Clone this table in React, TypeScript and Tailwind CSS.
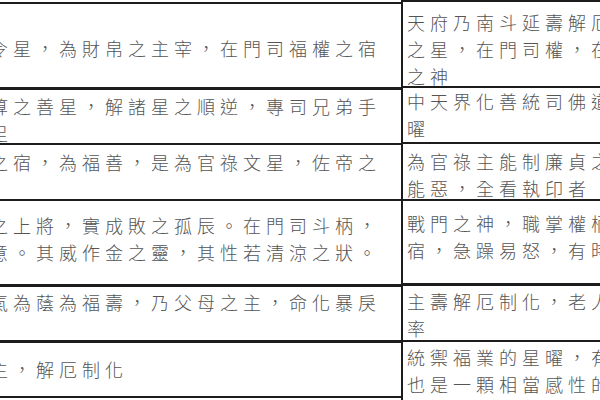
import React from "react";

type Row = {
  lines: string[];
  h: string;
  pt: string;
  border: string;
};

const leftRows: Row[] = [
  { lines: ["令星，為財帛之主宰，在門司福權之宿"], h: "h-[85px]", pt: "pt-[31px]", border: "border-t-2" },
  { lines: ["算之善星，解諸星之順逆，專司兄弟手", "足"], h: "h-[56px]", pt: "pt-[3px]", border: "border-t-[3px]" },
  { lines: ["之宿，為福善，是為官祿文星，佐帝之"], h: "h-[56px]", pt: "pt-[4px]", border: "border-t-2" },
  {
    lines: ["之上將，實成敗之孤辰。在門司斗柄，", "意。其威作金之靈，其性若清涼之狀。"],
    h: "h-[85px]",
    pt: "pt-[11px]",
    border: "border-t-2",
  },
  { lines: ["氣為蔭為福壽，乃父母之主，命化暴戾"], h: "h-[56px]", pt: "pt-[2px]", border: "border-t-[3px]" },
  { lines: ["主，解厄制化"], h: "h-[58px] border-b-2", pt: "pt-[13px]", border: "border-t-[3px]" },
];

const rightRows: Row[] = [
  { lines: ["天府乃南斗延壽解厄之", "之星，在門司權，在相", "之神"], h: "h-[86px]", pt: "pt-[7px]", border: "border-t-2" },
  { lines: ["中天界化善統司佛道", "曜"], h: "h-[56px]", pt: "pt-0", border: "border-t-2" },
  { lines: ["為官祿主能制廉貞之惡", "能惡，全看執印者"], h: "h-[57px]", pt: "pt-[4px]", border: "border-t-2" },
  { lines: ["戰門之神，職掌權柄", "宿，急躁易怒，有時"], h: "h-[84px]", pt: "pt-[9px]", border: "border-t-2" },
  { lines: ["主壽解厄制化，老人", "率"], h: "h-[57px]", pt: "pt-[2px]", border: "border-t-[3px]" },
  { lines: ["統禦福業的星曜，有", "也是一顆相當感性的"], h: "flex-1", pt: "pt-[2px]", border: "border-t-2" },
];

function Cell({ row, pad }: { row: Row; pad: string }) {
  return (
    <div className={`${row.h} ${row.pt} ${row.border} ${pad} shrink-0 border-[#1c1c1c] overflow-hidden`}>
      {row.lines.map((line, i) => (
        <div key={i} className="whitespace-nowrap text-[18px] leading-[27px] tracking-[5px] font-light text-[#555555]">
          {line}
        </div>
      ))}
    </div>
  );
}

export default function App() {
  return (
    <div className="w-[600px] h-[400px] overflow-hidden bg-white flex font-['Noto_Sans_CJK_TC','Noto_Sans_CJK_SC',sans-serif]">
      {/* left column, its start is cropped off */}
      <div className="w-[415px] ml-[-12px] shrink-0 flex flex-col pt-[2px] border-r-2 border-[#1c1c1c]">
        {leftRows.map((row, i) => (
          <Cell key={i} row={row} pad="pl-[2px]" />
        ))}
      </div>

      {/* right column, cut at the right edge */}
      <div className="flex-1 min-w-0 flex flex-col">
        {rightRows.map((row, i) => (
          <Cell key={i} row={row} pad="pl-[4px]" />
        ))}
      </div>
    </div>
  );
}
